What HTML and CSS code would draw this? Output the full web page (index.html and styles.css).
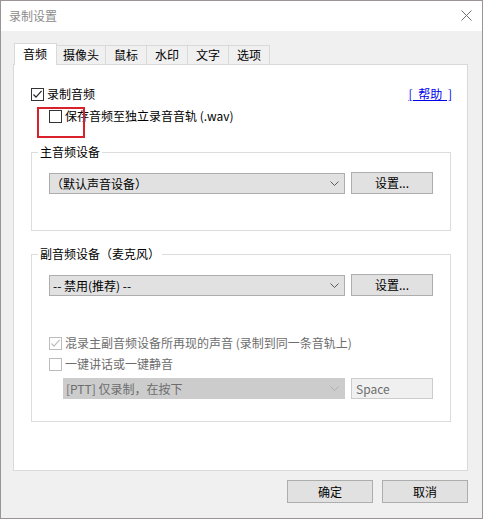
FILE: index.html
```html
<!DOCTYPE html>
<html lang="zh-CN">
<head>
<meta charset="utf-8">
<title>录制设置</title>
<link rel="stylesheet" href="styles.css">
</head>
<body>
<div class="window">
  <div class="titlebar">
    <span class="title">录制设置</span>
    <svg class="close" width="11" height="11" viewBox="0 0 11 11"><path d="M0.5 0.5L10.5 10.5M10.5 0.5L0.5 10.5" stroke="#6f6f6f" stroke-width="1" fill="none"/></svg>
  </div>
  <div class="body">
    <div class="tabs">
      <div class="tab tab-active">音频</div>
      <div class="tab tab-wide">摄像头</div>
      <div class="tab">鼠标</div>
      <div class="tab">水印</div>
      <div class="tab">文字</div>
      <div class="tab">选项</div>
    </div>
    <div class="panel">
      <div class="row row-first">
        <label class="check">
          <span class="box"><svg width="11" height="11" viewBox="0 0 11 11"><path d="M1.5 5.5L4 8.2L9.6 1.8" stroke="#262626" stroke-width="1.2" fill="none"/></svg></span>
          <span>录制音频</span>
        </label>
        <a class="help" href="#">[ 帮助 ]</a>
      </div>
      <div class="row row-sub">
        <label class="check">
          <span class="box"></span>
          <span>保存音频至独立录音音轨 (.wav)</span>
        </label>
      </div>

      <fieldset class="group group-main">
        <legend>主音频设备</legend>
        <div class="group-body">
          <div class="device-row">
            <div class="select">
              <span>（默认声音设备）</span>
              <svg class="chev" width="9" height="5" viewBox="0 0 9 5"><path d="M0.5 0.5L4.5 4.5L8.5 0.5" stroke="#5a5a5a" stroke-width="1" fill="none"/></svg>
            </div>
            <div class="btn">设置...</div>
          </div>
        </div>
      </fieldset>

      <fieldset class="group group-mic">
        <legend>副音频设备（麦克风）</legend>
        <div class="group-body mic-body">
          <div class="device-row">
            <div class="select">
              <span class="latin">-- 禁用(推荐) --</span>
              <svg class="chev" width="9" height="5" viewBox="0 0 9 5"><path d="M0.5 0.5L4.5 4.5L8.5 0.5" stroke="#5a5a5a" stroke-width="1" fill="none"/></svg>
            </div>
            <div class="btn">设置...</div>
          </div>
          <div class="row row-mix">
            <label class="check disabled">
              <span class="box"><svg width="11" height="11" viewBox="0 0 11 11"><path d="M1.5 5.5L4 8.2L9.6 1.8" stroke="#bcbcbc" stroke-width="1.2" fill="none"/></svg></span>
              <span>混录主副音频设备所再现的声音 (录制到同一条音轨上)</span>
            </label>
          </div>
          <div class="row row-ptt">
            <label class="check disabled">
              <span class="box"></span>
              <span>一键讲话或一键静音</span>
            </label>
          </div>
          <div class="device-row ptt-row">
            <div class="select select-disabled">
              <span>[PTT] 仅录制，在按下</span>
              <svg class="chev" width="9" height="5" viewBox="0 0 9 5"><path d="M0.5 0.5L4.5 4.5L8.5 0.5" stroke="#adadad" stroke-width="1" fill="none"/></svg>
            </div>
            <div class="keybox">Space</div>
          </div>
        </div>
      </fieldset>
    </div>
    <div class="footer">
      <div class="btn btn-dialog">确定</div>
      <div class="btn btn-dialog">取消</div>
    </div>
  </div>
  <div class="annotation"></div>
</div>
</body>
</html>
```

FILE: styles.css
```css
* { box-sizing: border-box; }

html, body {
  margin: 0;
  padding: 0;
  background: #f0f0f0;
}

body {
  font-family: "Noto Sans CJK SC", "Noto Sans", "Liberation Sans", sans-serif;
  font-size: 12px;
  line-height: 16px;
  color: #000;
}

.window {
  position: relative;
  width: 483px;
  height: 519px;
  border: 1px solid #9a9498;
  background: #f0f0f0;
  display: flex;
  flex-direction: column;
}

.titlebar {
  height: 30px;
  background: #fff;
  display: flex;
  align-items: center;
  justify-content: space-between;
  padding: 0 10px 0 8px;
}

.title {
  color: #8c8c8c;
  font-size: 12px;
  line-height: 16px;
  margin-top: -1px;
}

.close { display: block; margin-top: -1px; }

.body {
  flex: 1;
  padding: 0 14px 0 12px;
  display: flex;
  flex-direction: column;
}

.tabs {
  margin-top: 12px;
  height: 21px;
  display: flex;
  align-items: flex-end;
  padding-left: 1px;
}

.tab {
  height: 19px;
  padding: 0 8px;
  border-top: 1px solid #d9d9d9;
  border-right: 1px solid #d9d9d9;
  background: #f0f0f0;
  line-height: 18px;
  text-align: center;
  white-space: nowrap;
}

.tab-wide { padding: 0 6px 0 6px; }

.tab-active {
  position: relative;
  z-index: 1;
  height: 22px;
  margin-bottom: -1px;
  padding: 0 9px 0 8px;
  background: #fff;
  border-left: 1px solid #d9d9d9;
  line-height: 19px;
}

.panel {
  height: 407px;
  border: 1px solid #d9d9d9;
  background: #fff;
  padding: 19px 15px 0 17px;
}

.row {
  height: 20px;
  display: flex;
  align-items: center;
}

.row-first { justify-content: space-between; }

.row-sub { margin-top: 2px; padding-left: 18px; }

.check {
  display: flex;
  align-items: center;
  gap: 3px;
  white-space: nowrap;
}

.box {
  width: 13px;
  height: 13px;
  border: 1px solid #333;
  background: #fff;
  display: flex;
  align-items: center;
  justify-content: center;
  flex: none;
}

.box svg { display: block; }

.check.disabled { color: #6d6d6d; }
.check.disabled .box { border-color: #bcbcbc; }

.help {
  color: #0000ee;
  text-decoration: underline;
  white-space: pre;
  word-spacing: 3px;
}

.group {
  margin: 18px 1px 0 0;
  padding: 0;
  border: 1px solid #dcdcdc;
  min-width: 0;
}

.group legend {
  margin-left: 6px;
  padding: 0 2px;
  line-height: 16px;
}

.group-body {
  padding: 12px 0 36px 17px;
}

.group-mic { margin-top: 15px; }

.mic-body { padding-bottom: 22px; }

.device-row {
  height: 22px;
  display: flex;
  align-items: flex-end;
  gap: 6px;
}

.select {
  width: 296px;
  height: 21px;
  border: 1px solid #adadad;
  background: #e1e1e1;
  display: flex;
  align-items: center;
  justify-content: space-between;
  padding: 0 5px 0 1px;
  white-space: nowrap;
}

.select .latin { padding-left: 2px; }

.chev { display: block; flex: none; }

.btn {
  width: 82px;
  height: 22px;
  border: 1px solid #adadad;
  background: #e1e1e1;
  text-align: center;
  line-height: 20px;
}

.row-mix { margin-top: 37px; }
.row-ptt { margin-top: 1px; }

.ptt-row {
  margin-top: 4px;
  height: 21px;
  padding-left: 14px;
}

.select-disabled {
  width: 282px;
  background: #cccccc;
  border-color: #cccccc;
  color: #6d6d6d;
  padding-left: 2px;
}

.keybox {
  width: 82px;
  height: 21px;
  border: 1px solid #cccccc;
  background: #f0f0f0;
  color: #6d6d6d;
  padding-left: 4px;
  line-height: 19px;
}

.footer {
  margin-top: 9px;
  display: flex;
  justify-content: flex-end;
  gap: 9px;
}

.btn-dialog {
  width: 86px;
  height: 23px;
  line-height: 21px;
}

.annotation {
  position: absolute;
  left: 36px;
  top: 106px;
  width: 48px;
  height: 31px;
  border: 2px solid #d9212c;
  pointer-events: none;
}
```
